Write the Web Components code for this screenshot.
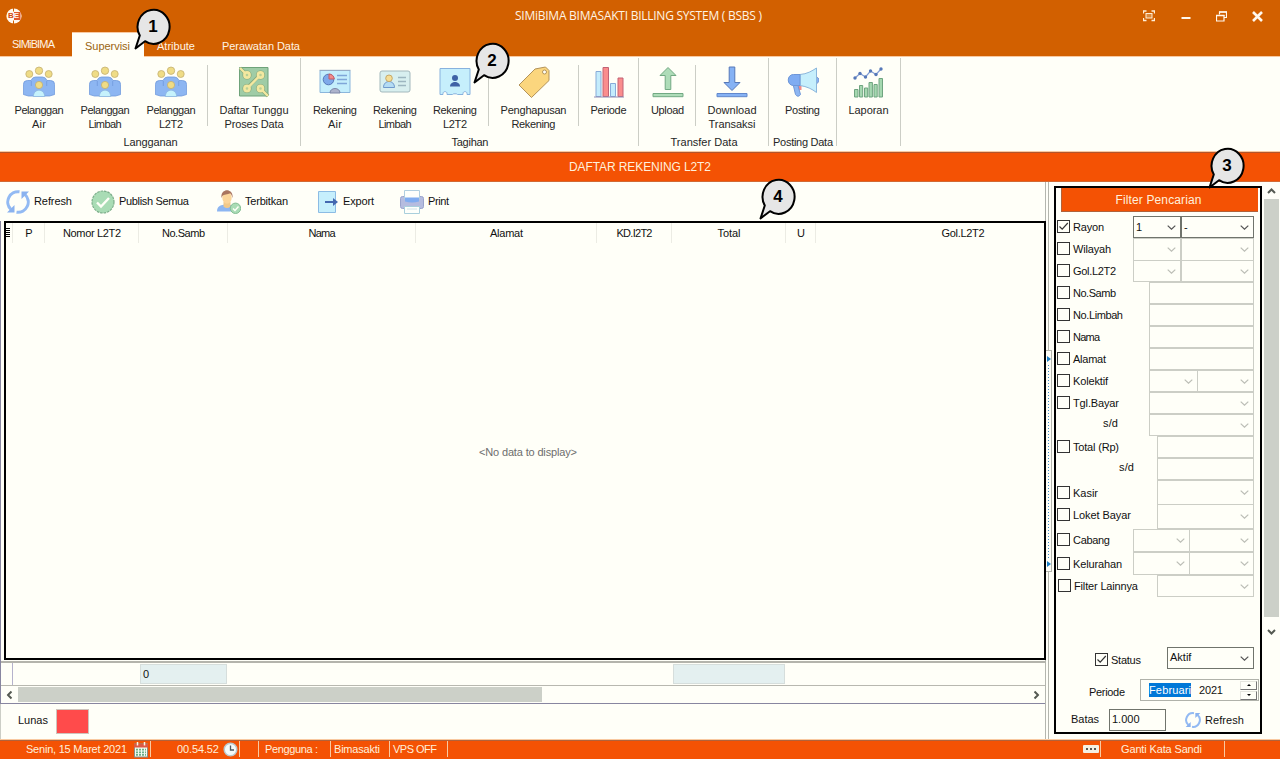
<!DOCTYPE html>
<html lang="id">
<head>
<meta charset="utf-8">
<title>SIMiBIMA</title>
<style>
html,body{margin:0;padding:0}
body{width:1280px;height:759px;overflow:hidden;background:#fffff8;font:11px/14px "Liberation Sans",Arial,sans-serif;color:#111}
</style>
</head>
<body>
<billing-app></billing-app>
<script>
const define = (name, css, html, setup) => customElements.define(name, class extends HTMLElement {
  connectedCallback() {
    if (this.shadowRoot) return;
    const root = this.attachShadow({mode: 'open'});
    const t = document.createElement('template');
    t.innerHTML = `<style>:host{display:block;box-sizing:border-box}*{box-sizing:border-box}${css}</style>` +
      (typeof html === 'function' ? html(this) : html);
    root.append(t.content.cloneNode(true));
    if (setup) setup(this, root);
  }
});
const at = (el, n, d = '') => el.getAttribute(n) ?? d;

/* Label whose tracking is adjusted so that it fills the width w */
define('fit-text', ':host{display:block;white-space:nowrap;flex:none}span{display:inline-block;white-space:pre}',
  '<span></span>',
  (el, root) => {
    const w = parseFloat(at(el, 'w', '0'));
    const s = root.querySelector('span');
    s.textContent = at(el, 't');
    if (!w) return;
    const n = s.textContent.length;
    el.style.width = w + 'px';
    if (n > 1) s.style.letterSpacing = ((w - s.getBoundingClientRect().width) / (n - 1)) + 'px';
  });

const BL = 'fill="#8db6f2" stroke="#7099dc"', YE = 'fill="#efdc86" stroke="#c4b070"';
const ICONS = {
  people: [32, 32, `<g stroke-width=".8"><circle cx="6.300" cy="8" r="3.500" ${YE}/><circle cx="25.700" cy="8" r="3.500" ${YE}/><circle cx="16" cy="4.700" r="3.700" ${YE}/>
   <path d="M.4 28.500V18.500q0-4 4-4H8q1.500-3.500 4.500-3.500h7q3 0 4.500 3.500h3.600q4 0 4 4v10l-5 1.500H5.400z" ${BL}/><path d="M8.300 15v5M23.700 15v5" stroke="#7099dc"/>
   <path d="M10.200 30.500c.8-8.500 10.800-8.500 11.600 0z" fill="#c6f2fc" stroke="#8db6e0"/><circle cx="16" cy="19" r="3.600" ${YE}/></g>`],
  circuit: [32, 32, `<path d="M1.500 1.500h28.500v28.500H1.500z" fill="#9fcca6" stroke="#6fa37a"/><g fill="none" stroke="#86a87c" stroke-width="3.600"><path d="M2 2l6 6M21 10 11 20M25 25l5 5"/></g>
   <g fill="#9fcca6" stroke="#86a87c" stroke-width="4"><circle cx="9" cy="9" r="2.600"/><circle cx="22.500" cy="9" r="2.600"/><circle cx="9" cy="22.500" r="2.600"/><circle cx="22.500" cy="22.500" r="2.600"/></g>
   <g fill="none" stroke="#f3e8a0" stroke-width="2.400"><path d="M2 2l5 5M20.800 10.700 10.700 20.800M24.500 24.500l5.500 5.500"/></g>
   <g fill="#b9cf94" stroke="#f3e8a0" stroke-width="2.600"><circle cx="9" cy="9" r="2.600"/><circle cx="22.500" cy="9" r="2.600"/><circle cx="9" cy="22.500" r="2.600"/><circle cx="22.500" cy="22.500" r="2.600"/></g>`],
  board: [32, 32, `<path d="M1 4.500h30v22H1z" fill="#c4eefc" stroke="#8bb6dc"/><path d="M.5 4.300h31" stroke="#9aabc0"/><circle cx="9.500" cy="13.500" r="5.300" fill="#7ea9ea" stroke="#5678b8"/><path d="M10 13V8a5.300 5.300 0 0 1 5.300 5z" fill="#f28a8a" stroke="#c05a66"/><path d="M18 9.500h10M18 13.500h10M18 17.500h10" stroke="#7fa6d8" stroke-width="1.400"/><path d="M11 27c0-6 10-6 10 0z" fill="#adb3cc" stroke="#7d86a8"/>`],
  card: [32, 32, `<rect x="1" y="5" width="30" height="21" rx="2" fill="#d8efef" stroke="#a3b8bc"/><path d="M4.500 21.500c0-8 11-8 11 0z" fill="#b4dcf4" stroke="#7099cc"/><circle cx="10" cy="12.300" r="3.300" fill="#f6dd94" stroke="#c5a868"/><path d="M19 11.500h8M19 15.500h8M19 19.500h8" stroke="#9db6c0" stroke-width="1.300"/>`],
  ticket: [32, 32, `<path d="M1 2.500h30v26h-3v-1c0-2.500-4-2.500-4 0v1h-5.500c0-1-5-1-5 0H8v-1c0-2.500-4-2.500-4 0v1H1z" fill="#c6effc" stroke="#88b2de"/><circle cx="16" cy="12" r="3" fill="#3e62a6"/><path d="M11 20.500c0-6 10-6 10 0z" fill="#3e62a6"/>`],
  tag: [32, 32, `<path d="M17 3 27.500 1l3.500 3.500v10L13.500 31.500 1 19z" fill="#fbd67e" stroke="#b3935a" stroke-linejoin="round"/><circle cx="26.500" cy="6" r="2" fill="#fffff8" stroke="#b3935a"/>`],
  bars: [32, 32, `<path d="M3 5.500h5v25H3zM17.500 17.500h5v13h-5z" fill="#c4ecfc" stroke="#88abd8"/><path d="M10 1.500h5.500v29H10zM25 12h5v18.500h-5z" fill="#fa8d8d" stroke="#c26274"/><path d="M1 31h30" stroke="#8e8bb4"/>`],
  upload: [32, 32, `<path d="M16 1.500 24 9.500h-5.200v14h-5.600v-14H8z" fill="#aedcb8" stroke="#72a983"/><path d="M1 27.500h30v3.200H1z" fill="#aedcb8" stroke="#72a983"/>`],
  download: [32, 32, `<path d="M16 24.500 24 16.500h-5.200V1h-5.600v15.500H8z" fill="#86b2f4" stroke="#5678b8"/><path d="M1 27.500h30v3.200H1z" fill="#86b2f4" stroke="#6288cc"/>`],
  horn: [32, 32, `<path d="M29 11c4 .5 4 6 0 6.500" fill="#86b2f4" stroke="#6f90cc"/><path d="M10.500 20h4v4h-4z" fill="#f28a8a"/><path d="M6 18l2.500 10.500q2.500 3.500 5 0L10.500 18z" fill="#8db6f2" stroke="#6f97d8"/><path d="M13 8.500C20 8 25 5 29.500 2v24.500C25 23 20 20.500 13 19.500z" fill="#c6effc" stroke="#8bb6dc"/><path d="M13 8.500H6.500c-7 0-7 11 0 11H13z" fill="#7facf2" stroke="#6f97d8"/>`],
  chart: [32, 32, `<g fill="#a5d8b0" stroke="#6fa480"><path d="M1.500 23.500H5v7.500H1.500zM6.500 19.500h3.200V31H6.500zM11.500 22h3.200v9h-3.200zM16 16.500h3.400V31H16zM21 18.500h3.200V31H21zM26 12.500h3.500V31H26z"/></g><path d="m2 12 5-4.500 5.500 3.500 5-6 5.500 3.500 5-5.500" fill="none" stroke="#809cd4" stroke-width="1.200"/><g fill="#5678b8"><circle cx="2" cy="12" r="1.700"/><circle cx="7" cy="7.500" r="1.700"/><circle cx="12.500" cy="11" r="1.700"/><circle cx="17.500" cy="5" r="1.700"/><circle cx="23" cy="8.500" r="1.700"/><circle cx="28" cy="3" r="1.700"/></g>`],
  refresh: [24, 24, `<g fill="none" stroke="#93baf3" stroke-width="3"><path d="M13.500 1.800A10.300 10.300 0 0 0 5 19.500"/><path d="M10.500 22.200A10.300 10.300 0 0 0 19 4.500"/></g><path d="M1 22.500h7.500V15zM23 1.500h-7.500V9z" fill="#8ab2ef"/>`],
  seal: [24, 24, `<circle cx="12" cy="12" r="11" fill="#a9dcb5" stroke="#7cae8a" stroke-width="1.200" stroke-dasharray="2.600 .9"/><path d="m6 12.500 4 4 8-8.500" fill="none" stroke="#fffff8" stroke-width="2.400"/>`],
  user: [24, 24, `<path d="M0 21.500c0-5 3-6 7-7h5c4 1 6 2 6.500 7z" fill="#8db6f2"/><path d="M6.500 12h7v4.500q-3.500 3-7 0z" fill="#f2c98a"/><ellipse cx="10" cy="7.800" rx="4.700" ry="6" fill="#fbd59a"/><path d="M4.500 8C3-2.500 17-2.500 15.500 8c-1-4-2-4.500-3-4.500C9 5 6 3.500 4.500 8z" fill="#a9745e"/><circle cx="18.500" cy="18.300" r="5.200" fill="#a9dcb5" stroke="#85bd94"/><path d="m16 18.500 2 2 3.500-4" fill="none" stroke="#fffff8" stroke-width="1.400"/>`],
  export: [24, 24, `<path d="M1.500 1.500h17v21h-17z" fill="#c6effc" stroke="#8cbce4"/><path d="M8 12h9" stroke="#4468b0" stroke-width="2"/><path d="m16 8 5 4-5 4z" fill="#4468b0"/>`],
  print: [24, 24, `<rect x=".5" y="6.500" width="23" height="12" rx="2" fill="#b5bcdf" stroke="#9aa3cc"/><path d="M4.500.5h15V9h-15z" fill="#fdfffb" stroke="#b0cfe0"/><path d="M5 7.500h14v4q-7 2-14 0z" fill="#7facf0"/><path d="M4.500 16.500h15V23.500h-15z" fill="#fdfffb" stroke="#a9cfdc"/><path d="M7 19h10" stroke="#cfe2e8"/>`],
  calendar: [16, 17, `<rect x="1.500" y="3" width="13" height="13" fill="#f3faf0" stroke="#8a8f86"/><path d="M1 3h14v3.500H1z" fill="#dd5844"/><path d="M4.500 1v3.500M11.500 1v3.500" stroke="#f8f4e8" stroke-width="1.500"/><g stroke="#6cae86" stroke-width="1.700" stroke-dasharray="2 1"><path d="M3 8.700h10M3 11.300h10M3 13.900h10"/></g>`],
  clock: [15, 15, `<circle cx="7.500" cy="7.500" r="6.300" fill="#f4fafa" stroke="#b9c8cc" stroke-width="1.500"/><path d="M7.500 3.500V8H11" fill="none" stroke="#4a5a62" stroke-width="1.300"/>`],
  pin: [16, 8, `<rect width="16" height="8" rx="1" fill="#f5efe2"/><path d="M3 4h2M7 4h2M11 4h2" stroke="#555" stroke-width="2"/>`],
  logo: [16, 16, `<circle cx="8" cy="8" r="7.600" fill="#fff8ee"/><path d="M7.500 0v3.500M7.500 12.500V16" stroke="#d26000" stroke-width="1"/><path d="M8 4h6.500v8H8z" fill="#e2552a"/>`],
  chev: [9, 5, `<path d="m.7.600 3.800 3.600L8.300.600" fill="none" stroke="currentColor" stroke-width="1.200"/>`],
  arrow: [9, 6, `<path d="m1 1 3.500 3.500L8 1" fill="none" stroke="#555a52" stroke-width="2"/>`],
  full: [12, 12, `<path d="M.5 3.500V1h3M8.500 1h3v2.500M11.500 8v2.500h-3M3.500 10.500h-3V8" fill="none" stroke="#ffefd8" stroke-width="1.300"/><rect x="3" y="3.500" width="6" height="4.500" fill="#dc8a3c" stroke="#ffefd8"/>`],
  min: [10, 12, `<path d="M.5 8h9" stroke="#fff8ee" stroke-width="2"/>`],
  restore: [11, 11, `<path d="M3.500 3.500V1h7v5.500H8.500M.5 4.500h7.500v5.500H.5z" fill="none" stroke="#fff8ee" stroke-width="1.200"/><path d="M0 4.500h8.500M3 1h8" stroke="#fff8ee" stroke-width="1.700"/>`],
  close: [11, 11, `<path d="m1 1 9 9M10 1l-9 9" stroke="#fff8ee" stroke-width="2.600"/>`]
};
define('ui-icon', ':host{display:block;flex:none}svg{display:block}', el => {
  const [w, h, body] = ICONS[at(el, 'name')];
  const s = at(el, 'size') ? at(el, 'size') / w : 1;
  return `<svg width="${w * s}" height="${h * s}" viewBox="0 0 ${w} ${h}">${body}</svg>`;
});

/* Numbered speech bubble laid over the window */
define('call-out', ':host{position:absolute;width:37px;height:43px;z-index:5}svg{display:block}text{font:bold 17px "Liberation Sans",Arial,sans-serif;text-anchor:middle}',
  el => `<svg width="37" height="43" viewBox="0 0 37 43"><path d="M5.800 27.500A16 17 0 1 1 11 33.200L1.500 40.500z" fill="#e6e6e6" stroke="#000" stroke-width="2" stroke-linejoin="round"/><text x="19" y="23.500">${at(el, 'n')}</text></svg>`);

/* Title bar with tabs */
define('title-bar', `:host{height:57px;background:#d26000;border-bottom:1px solid #f9c9a0;color:#fff4e4;display:flex;flex-direction:column}
 .top{height:32px;display:grid;grid-template-columns:515px 1fr 137px;align-items:center;flex:none}
 .logo{margin-left:6px;display:grid}.logo>*{grid-area:1/1;align-self:center}.logo b{font:bold 8px/16px "Liberation Sans",sans-serif;padding-left:2px;color:#d24a10}.logo b i{font-style:normal;color:#fff8ee}
 .ttl{font:12px/16px "Open Sans","Noto Sans",sans-serif}
 .win{display:flex;align-items:center;height:30px}
 .tabs{display:flex;height:25px;flex:none}
 .tab{padding-top:7px;height:24px}.tab.on{background:#fffff8;color:#9a6410;height:25px;border-top:1px solid #f9c9a0;padding-top:6px}`,
 `<div class="top"><div class="logo"><ui-icon name="logo"></ui-icon><b>B<i>E</i></b></div><fit-text class="ttl" t="SIMiBIMA BIMASAKTI BILLING SYSTEM ( BSBS )" w="247"></fit-text>
 <div class="win"><ui-icon name="full"></ui-icon><ui-icon name="min" style="margin-left:26px"></ui-icon><ui-icon name="restore" style="margin-left:25px"></ui-icon><ui-icon name="close" style="margin-left:25px"></ui-icon></div></div>
 <div class="tabs"><div class="tab" style="width:72px;padding:5px 0 0 12px"><fit-text t="SIMiBIMA" w="43"></fit-text></div><div class="tab on" style="width:72px;padding-left:13px"><fit-text t="Supervisi" w="45"></fit-text></div><div class="tab" style="padding-left:13px;width:78px"><fit-text t="Atribute" w="38"></fit-text></div><div class="tab"><fit-text t="Perawatan Data" w="78"></fit-text></div></div>`);

/* Ribbon */
define('ribbon-item', ':host{display:flex;flex-direction:column;align-items:center;padding-top:9px;flex:none}ui-icon{margin-bottom:5px}',
  el => `<ui-icon name="${at(el, 'icon')}"></ui-icon>` + at(el, 'lines').split('|').map(l => { const [t, w] = l.split(':'); return `<fit-text t="${t}" w="${w}"></fit-text>`; }).join(''));
define('ribbon-sep', ':host{width:1px;height:61px;background:#cccec6;margin-top:8px;flex:none}', '');
define('ribbon-group', `:host{height:94px;display:flex;flex:none;color:#262626}.g{flex:1;display:flex;flex-direction:column}.row{display:flex;height:78px}.cap{display:flex;justify-content:center;padding-left:1px}.line{width:1px;height:88px;margin-top:1px;background:#cccec6}`,
  el => `<div class="g"><div class="row"><slot></slot></div><div class="cap"><fit-text t="${at(el, 'cap')}" w="${at(el, 'cw')}"></fit-text></div></div><div class="line"></div>`);
define('ribbon-bar', ':host{display:flex;height:94px}ribbon-item{width:var(--w)}',
 `<ribbon-group cap="Langganan" cw="54" style="width:301px"><ribbon-item style="--w:66px;margin-left:6px" icon="people" lines="Pelanggan:49|Air:14"></ribbon-item><ribbon-item style="--w:66px" icon="people" lines="Pelanggan:49|Limbah:33"></ribbon-item><ribbon-item style="--w:66px" icon="people" lines="Pelanggan:49|L2T2:24"></ribbon-item><ribbon-sep style="margin-left:3px"></ribbon-sep><ribbon-item style="--w:92px" icon="circuit" lines="Daftar Tunggu:69|Proses Data:59"></ribbon-item></ribbon-group>
 <ribbon-group cap="Tagihan" cw="37" style="width:338px"><ribbon-item style="--w:60px;margin-left:4px" icon="board" lines="Rekening:44|Air:14"></ribbon-item><ribbon-item style="--w:60px" icon="card" lines="Rekening:44|Limbah:33"></ribbon-item><ribbon-item style="--w:60px" icon="ticket" lines="Rekening:44|L2T2:24"></ribbon-item><ribbon-sep style="margin-left:3px"></ribbon-sep><ribbon-item style="--w:89px" icon="tag" lines="Penghapusan:66|Rekening:44"></ribbon-item><ribbon-sep></ribbon-sep><ribbon-item style="--w:59px" icon="bars" lines="Periode:36"></ribbon-item></ribbon-group>
 <ribbon-group cap="Transfer Data" cw="67" style="width:130px"><ribbon-item style="--w:55px;margin-left:1px" icon="upload" lines="Upload:33"></ribbon-item><ribbon-sep></ribbon-sep><ribbon-item style="--w:72px" icon="download" lines="Download:49|Transaksi:47"></ribbon-item></ribbon-group>
 <ribbon-group cap="Posting Data" cw="60" style="width:68px"><ribbon-item style="--w:67px" icon="horn" lines="Posting:35"></ribbon-item></ribbon-group>
 <ribbon-group cap="" cw="0" style="width:64px"><ribbon-item style="--w:63px" icon="chart" lines="Laporan:40"></ribbon-item></ribbon-group>`);

define('page-heading', ':host{height:31px;background:#f45204;border-top:1px solid #f9c9a0;border-bottom:1px solid #d26a34;color:#fff0dc;display:flex;justify-content:center;align-items:center;font-size:12px}.b{border-top:1px solid #b2552c;flex:1;height:29px;display:flex;justify-content:center;align-items:center}',
  '<div class="b"><fit-text t="DAFTAR REKENING L2T2" w="142"></fit-text></div>');

/* Toolbar over the grid */
define('tool-button', ':host{display:flex;align-items:center;flex:none}fit-text{margin-left:var(--gap,4px);margin-top:var(--up,0)}',
  el => `<ui-icon name="${at(el, 'icon')}" size="${at(el, 'size', '24')}"></ui-icon><fit-text t="${at(el, 't')}" w="${at(el, 'w')}"></fit-text>`);
define('tool-bar', ':host{display:flex;height:39px;align-items:center;padding-left:6px;flex:none}tool-button{--up:-1px}',
  `<tool-button icon="refresh" t="Refresh" w="38"></tool-button><tool-button icon="seal" t="Publish Semua" w="70" style="margin-left:19px"></tool-button><tool-button icon="user" t="Terbitkan" w="43" style="margin-left:28px"></tool-button><tool-button icon="export" t="Export" w="31" style="margin-left:29px;--gap:2px"></tool-button><tool-button icon="print" t="Print" w="21" style="margin-left:26px"></tool-button>`);

/* Data grid */
define('data-grid', `:host{height:439px;width:1042px;border:2px solid #000;overflow:hidden;display:flex;flex-direction:column;position:relative}
 .head{display:grid;grid-template-columns:7px 32px 94px 89px 188px 181px 75px 114px 30px 294px;height:20px;flex:none}
 .head>div{border-right:1px solid #ecece4;display:flex;justify-content:center;align-items:center}
 .mark{display:grid;gap:1px;margin-top:5px}.mark i{width:4px;height:1px;background:#000}
 .empty{flex:1;display:flex;justify-content:center;padding:202px 0 0 6px;color:#6e6e6e}`,
 () => `<div class="head"><div style="justify-content:flex-start;align-items:flex-start"><span class="mark"><i></i><i></i><i></i><i></i><i></i></span></div>` +
  [['P', 0], ['Nomor L2T2', 58], ['No.Samb', 43], ['Nama', 27], ['Alamat', 33], ['KD.I2T2', 36], ['Total', 23], ['U', 0], ['Gol.L2T2', 43]].map(([t, w]) => `<div><fit-text t="${t}" w="${w}" style="margin-left:1px"></fit-text></div>`).join('') +
  `</div><div class="empty"><fit-text t="&lt;No data to display&gt;" w="98"></fit-text></div>`);
define('grid-footer', `:host{border-top:2px solid #b4b4ac;height:42px;margin-top:1px}
 .sum{display:flex;height:23px;border-bottom:1px solid #b8b8b0}.sum>*{flex:none}
 .lead{width:12px;border-right:1px solid #b5b2cc}.cell{background:#e4f0f0;border:1px solid #d6dedc;height:20px;margin-top:1px;padding:1px 0 0 2px;line-height:16px}
 .scroll{display:flex;align-items:center;height:17px}.thumb{background:#ccd0c8;width:524px;height:15px}
 .l{transform:rotate(90deg);margin-left:4px}.r{transform:rotate(-90deg)}`,
 `<div class="sum"><div class="lead"></div><div class="cell" style="width:87px;margin-left:127px">0</div><div class="cell" style="width:112px;margin-left:446px"></div></div>
 <div class="scroll"><ui-icon class="l" name="arrow"></ui-icon><div class="thumb" style="margin-left:4px"></div><ui-icon class="r" name="arrow" style="margin-left:490px"></ui-icon></div>`);
define('grid-pane', `:host{width:1046px;flex:none;display:flex;flex-direction:column;border-right:1px solid #b4b6ae}
 .wrap{border-left:1px solid #8886a0;border-bottom:1px solid #8886a0;height:483px;flex:none}
 data-grid{margin-left:3px}.legend{height:35px;border-left:1px solid #cccec6;display:flex;align-items:center;padding:0 0 0 17px;flex:none}
 .sw{width:33px;height:25px;background:#ff4b4b;border:1px solid #cfc4bc;margin-left:8px}`,
 `<tool-bar></tool-bar><div class="wrap"><data-grid></data-grid><grid-footer></grid-footer></div><div class="legend"><fit-text t="Lunas" w="30" style="margin-top:-3px"></fit-text><div class="sw"></div></div>`);

define('pane-splitter', `:host{width:8px;flex:none;display:flex;flex-direction:column}
 .ln{width:3px;border-right:1px solid #b4b6ae}
 .grip{height:222px;width:6px;border:1px solid #b4b6ae;border-left:0;display:flex;flex-direction:column;align-items:flex-start;justify-content:space-between;padding:5px 0 4px 1px}
 .dots{width:1px;flex:1;margin:3px 1px;background:repeating-linear-gradient(#3f8cc8 0 1px,transparent 1px 3px)}
 .tri{border:3px solid transparent;border-left:4px solid #1b7fc6;border-right:0}`,
 `<div class="ln" style="height:168px"></div><div class="grip"><div class="tri"></div><div class="dots"></div><div class="tri"></div></div><div class="ln" style="flex:1"></div>`);

/* Form controls */
define('check-box', ':host{width:13px;height:13px;border:1px solid #333;flex:none}svg{display:block}',
  el => el.hasAttribute('checked') ? '<svg width="11" height="11"><path d="m1.500 5.500 2.700 2.700L9.800 2" fill="none" stroke="#333" stroke-width="1.200"/></svg>' : '');
define('input-box', ':host{border:1px solid #cccec6;color:#bcbeb6;flex:none;display:flex;align-items:center;justify-content:space-between;padding:0 4px 0 2px}:host([on]){border-color:#70746c;color:#555}span{color:#111;margin-top:var(--up,0)}',
  el => `<span>${at(el, 't')}</span>${el.hasAttribute('combo') ? '<ui-icon name="chev"></ui-icon>' : ''}`);
define('filter-row', `:host{display:flex;height:var(--h,22px)}.lab{width:var(--lw);flex:none;display:flex;align-items:flex-start;padding-left:var(--lp,0)}check-box{margin:var(--ct,4px) 3px 0 var(--cl,1px)}fit-text{margin-top:var(--tt,4px)}.f{display:flex;flex:none}::slotted(*){height:100%}`,
  el => `<div class="lab">${at(el, 'chk') !== 'none' ? `<check-box ${at(el, 'chk') === 'on' ? 'checked' : ''}></check-box>` : ''}<fit-text t="${at(el, 't')}" w="${at(el, 'w')}"></fit-text></div><div class="f"><slot></slot></div>`);
const two = (a, b, extra = '') => `<input-box combo style="width:${a}px;${extra}"></input-box><input-box combo style="width:${b}px;${extra}"></input-box>`;
const one = (w, combo) => `<input-box ${combo ? 'combo' : ''} style="width:${w}px"></input-box>`;
define('filter-panel', `:host{width:208px;height:548px;border:2px solid #000;margin-top:4px;flex:none}
 h2{margin:0 2px 4px 5px;height:24px;background:#f45204;border:1px solid #b2623a;border-top:0;border-right:0;color:#fff0dc;font:12px/16px "Liberation Sans",sans-serif;display:flex;justify-content:center;align-items:center}
 h2 fit-text{margin-left:-3px}
 .line{display:flex;align-items:center}
 .date{width:119px;height:22px;border:1px solid #b0b2aa;display:flex;align-items:center;padding:0 1px 0 8px}
 .hl{background:#0078d7;color:#fff}
 .spin{margin-left:auto;display:flex;flex-direction:column;width:17px;gap:1px}.spin i{height:9px;border:1px solid #e6e6de;border-right-color:#777;border-bottom-color:#777;display:flex;justify-content:center;align-items:center}
 .spin i::after{content:"";border:2px solid transparent;border-bottom:2px solid #000;border-top:0}.spin i+i::after{transform:rotate(180deg)}`,
 `<h2><fit-text t="Filter Pencarian" w="86"></fit-text></h2>
 <filter-row t="Rayon" w="31" chk="on" style="--lw:77px"><input-box on combo t="1" style="width:48px"></input-box><input-box on combo t="-" style="width:73px"></input-box></filter-row>
 <filter-row t="Wilayah" w="38" style="--lw:77px">${two(48, 73, 'border-bottom:0')}</filter-row>
 <filter-row t="Gol.L2T2" w="43" style="--lw:77px">${two(48, 73)}</filter-row>
 <filter-row t="No.Samb" w="43" style="--lw:93px">${one(105)}</filter-row>
 <filter-row t="No.Limbah" w="50" style="--lw:93px">${one(105)}</filter-row>
 <filter-row t="Nama" w="27" style="--lw:93px">${one(105)}</filter-row>
 <filter-row t="Alamat" w="33" style="--lw:93px">${one(105)}</filter-row>
 <filter-row t="Kolektif" w="35" style="--lw:93px"><input-box combo style="width:48px;border-right:0"></input-box><input-box combo style="width:57px"></input-box></filter-row>
 <filter-row t="Tgl.Bayar" w="46" style="--lw:93px">${one(105, 1)}</filter-row>
 <filter-row t="s/d" w="15" chk="none" style="--lw:93px;--tt:2px;--lp:47px">${one(105, 1)}</filter-row>
 <filter-row t="Total (Rp)" w="46" style="--lw:101px">${one(97)}</filter-row>
 <filter-row t="s/d" w="15" chk="none" style="--lw:101px;--tt:2px;--lp:63px">${one(97)}</filter-row>
 <filter-row t="Kasir" w="25" style="--lw:101px;--h:24px;--ct:6px;--tt:6px"><input-box combo style="width:97px;border-bottom:0"></input-box></filter-row>
 <filter-row t="Loket Bayar" w="58" style="--lw:101px;--h:25px">${one(97, 1)}</filter-row>
 <filter-row t="Cabang" w="37" style="--lw:77px;--h:23px"><input-box combo style="width:56px;border-right:0"></input-box><input-box combo style="width:65px"></input-box></filter-row>
 <filter-row t="Kelurahan" w="49" style="--lw:77px;--h:23px;--ct:5px;--tt:5px"><input-box combo style="width:56px;border-right:0"></input-box><input-box combo style="width:65px"></input-box></filter-row>
 <filter-row t="Filter Lainnya" w="64" style="--lw:101px;--cl:2px">${one(97, 1)}</filter-row>
 <div class="line" style="margin-top:50px;height:22px;padding-left:39px"><check-box checked style="margin-top:3px"></check-box><fit-text t="Status" w="30" style="margin:4px 0 0 3px"></fit-text><input-box on combo t="Aktif" style="width:87px;height:22px;margin-left:26px;--up:-2px"></input-box></div>
 <div class="line" style="margin-top:10px;height:22px;padding-left:33px"><fit-text t="Periode" w="36" style="margin-top:4px"></fit-text><div class="date" style="margin-left:15px"><fit-text class="hl" t="Februari" w="42"></fit-text><fit-text t="2021" w="24" style="margin-left:8px"></fit-text><div class="spin"><i></i><i></i></div></div></div>
 <div class="line" style="margin-top:8px;height:22px;padding-left:15px"><fit-text t="Batas" w="28" style="margin-top:-2px"></fit-text><input-box on t="1.000" style="width:57px;height:22px;margin-left:10px;--up:-2px"></input-box><tool-button icon="refresh" size="16" t="Refresh" w="39" style="margin-left:19px"></tool-button></div>`);

define('v-scroll', ':host{width:16px;margin-left:2px;flex:none;display:flex;flex-direction:column;align-items:flex-start;padding:6px 0 0 0}ui-icon{margin-left:3px}.t{width:15px;height:418px;background:#ccd0c8;margin:5px 0 12px}.u{transform:rotate(180deg)}',
  '<ui-icon class="u" name="arrow"></ui-icon><div class="t"></div><ui-icon name="arrow"></ui-icon>');

define('status-bar', `:host{height:20px;background:#f45204;border-top:1px solid #f9c9a0;color:#fff0dc;display:grid;grid-template-columns:151px 89px 19px 72px 59px 58px 653px 124px 1fr;box-shadow:inset 0 1px #b2623a}
 div{display:flex;align-items:center;border-right:1px solid #f9c9a0;height:16px;margin-top:1px}div:last-child{border:0}`,
 `<div><fit-text t="Senin, 15 Maret 2021" w="101" style="margin-left:26px"></fit-text><ui-icon name="calendar" style="margin-left:6px"></ui-icon></div>
 <div><fit-text t="00.54.52" w="42" style="margin-left:26px"></fit-text><ui-icon name="clock" style="margin-left:4px"></ui-icon></div><div></div>
 <div><fit-text t="Pengguna :" w="53" style="margin-left:6px"></fit-text></div><div><fit-text t="Bimasakti" w="46" style="margin-left:3px"></fit-text></div><div><fit-text t="VPS OFF" w="44" style="margin-left:3px"></fit-text></div>
 <div><ui-icon name="pin" style="margin-left:635px"></ui-icon></div><div><fit-text t="Ganti Kata Sandi" w="81" style="margin-left:20px"></fit-text></div><div></div>`);

define('billing-app', `:host{position:relative;width:1280px;height:759px;background:#fffff8}.main{display:flex;height:557px}`,
 `<title-bar></title-bar><ribbon-bar></ribbon-bar><page-heading></page-heading>
 <div class="main"><grid-pane></grid-pane><pane-splitter></pane-splitter><filter-panel></filter-panel><v-scroll></v-scroll></div><status-bar></status-bar>
 <call-out n="1" style="left:134px;top:8px"></call-out><call-out n="2" style="left:473px;top:42px"></call-out><call-out n="3" style="left:1208px;top:147px"></call-out><call-out n="4" style="left:759px;top:178px"></call-out>`);
</script>
</body>
</html>
